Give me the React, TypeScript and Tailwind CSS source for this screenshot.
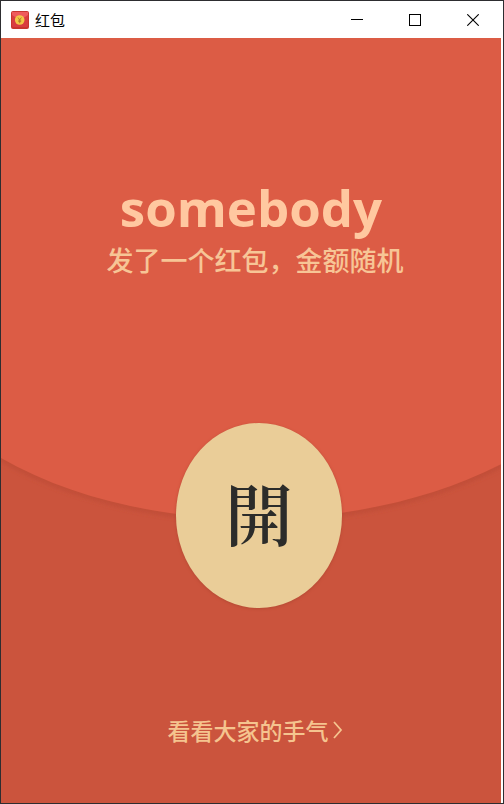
import React from "react";

function PacketIcon() {
  return (
    <svg className="h-[18px] w-[18px]" viewBox="0 0 18 18" aria-hidden="true">
      <rect width="18" height="18" rx="2" fill="#c9362f" />
      <rect x="1" y="1" width="16" height="15" rx="1.5" fill="#d93d40" />
      <path d="M1 1h16v3Q9 11 1 4z" fill="#ef5b5b" />
      <circle cx="8.7" cy="9" r="4.8" fill="#f3c746" />
      <path d="M7 6.5l1.7 2.3 1.7-2.3M8.7 8.8v3.4M7.2 9.2h3M7.2 10.6h3" stroke="#a87422" strokeWidth="0.8" fill="none" />
    </svg>
  );
}

function TitleBar() {
  const control = "flex h-[37px] w-[58px] items-center justify-center";
  return (
    <header className="flex h-[37px] shrink-0 items-center justify-between bg-white">
      <div className="flex items-center gap-[6px] pl-[10px]">
        <PacketIcon />
        <h1 className="font-['Noto_Sans_CJK_SC',sans-serif] text-[15px] leading-4 text-black">红包</h1>
      </div>
      <div className="flex pr-[1px]">
        <button className={control} aria-label="Minimize">
          <svg width="12" height="12" shapeRendering="crispEdges"><path d="M0 5.5h12" stroke="#000" /></svg>
        </button>
        <button className={control} aria-label="Maximize">
          <svg width="12" height="12" shapeRendering="crispEdges"><rect x="0.5" y="0.5" width="11" height="11" fill="none" stroke="#000" /></svg>
        </button>
        <button className={control} aria-label="Close">
          <svg width="12" height="12"><path d="M0.3 0.3l11.4 11.4M11.7 0.3L0.3 11.7" stroke="#000" strokeWidth="1.1" /></svg>
        </button>
      </div>
    </header>
  );
}

function EnvelopeBackdrop() {
  return (
    <svg className="absolute inset-0 h-full w-full" viewBox="0 0 500 765" preserveAspectRatio="none" aria-hidden="true">
      <defs>
        <filter id="soft" x="-5%" y="-5%" width="110%" height="110%">
          <feGaussianBlur stdDeviation="2" />
        </filter>
      </defs>
      <rect width="500" height="765" fill="#cb543d" />
      <path d="M-10 415C130 502 360 504 510 422" fill="none" stroke="#c04d37" strokeWidth="5" filter="url(#soft)" />
      <path d="M-10 0H510V421C360 503 130 501 -10 414Z" fill="#dc5c45" />
    </svg>
  );
}

export default function App() {
  return (
    <div className="flex min-h-screen flex-col border border-[#2d2d30] bg-white">
      <TitleBar />
      <main className="relative mr-[2px] flex flex-1 flex-col bg-[#cb543d] font-['Noto_Sans_CJK_SC',sans-serif]">
        <EnvelopeBackdrop />
        <div className="relative flex flex-1 flex-col items-center">
          <h2 className="pt-[136px] font-['Open_Sans',sans-serif] text-[51px] leading-[66px] font-bold text-[#ffc8a0]">somebody</h2>
          <p className="pt-[2px] pl-2 text-[27px] leading-9 font-medium text-[#f7c596]">发了一个红包，金额随机</p>
          <div className="pt-[145px] pl-4">
            <button className="flex h-[185px] w-[166px] items-center justify-center rounded-[50%] bg-[#eacd98] pb-2 font-['Noto_Serif_CJK_TC','Noto_Serif_CJK_SC','Liberation_Serif','Noto_Sans_CJK_TC',serif] text-[68px] leading-none font-semibold text-[#2c2c2a] shadow-[0_1px_3px_#b54a34]">
              開
            </button>
          </div>
          <a href="#luck" className="mt-auto mb-[55px] flex items-center gap-1 pl-2 text-[23px] leading-9 font-medium text-[#f5c48f]">
            看看大家的手气
            <svg width="10" height="18" viewBox="0 0 10 18" fill="none" stroke="currentColor" strokeWidth="1.8" aria-hidden="true">
              <path d="M1 1l7 8-7 8" />
            </svg>
          </a>
        </div>
      </main>
    </div>
  );
}
